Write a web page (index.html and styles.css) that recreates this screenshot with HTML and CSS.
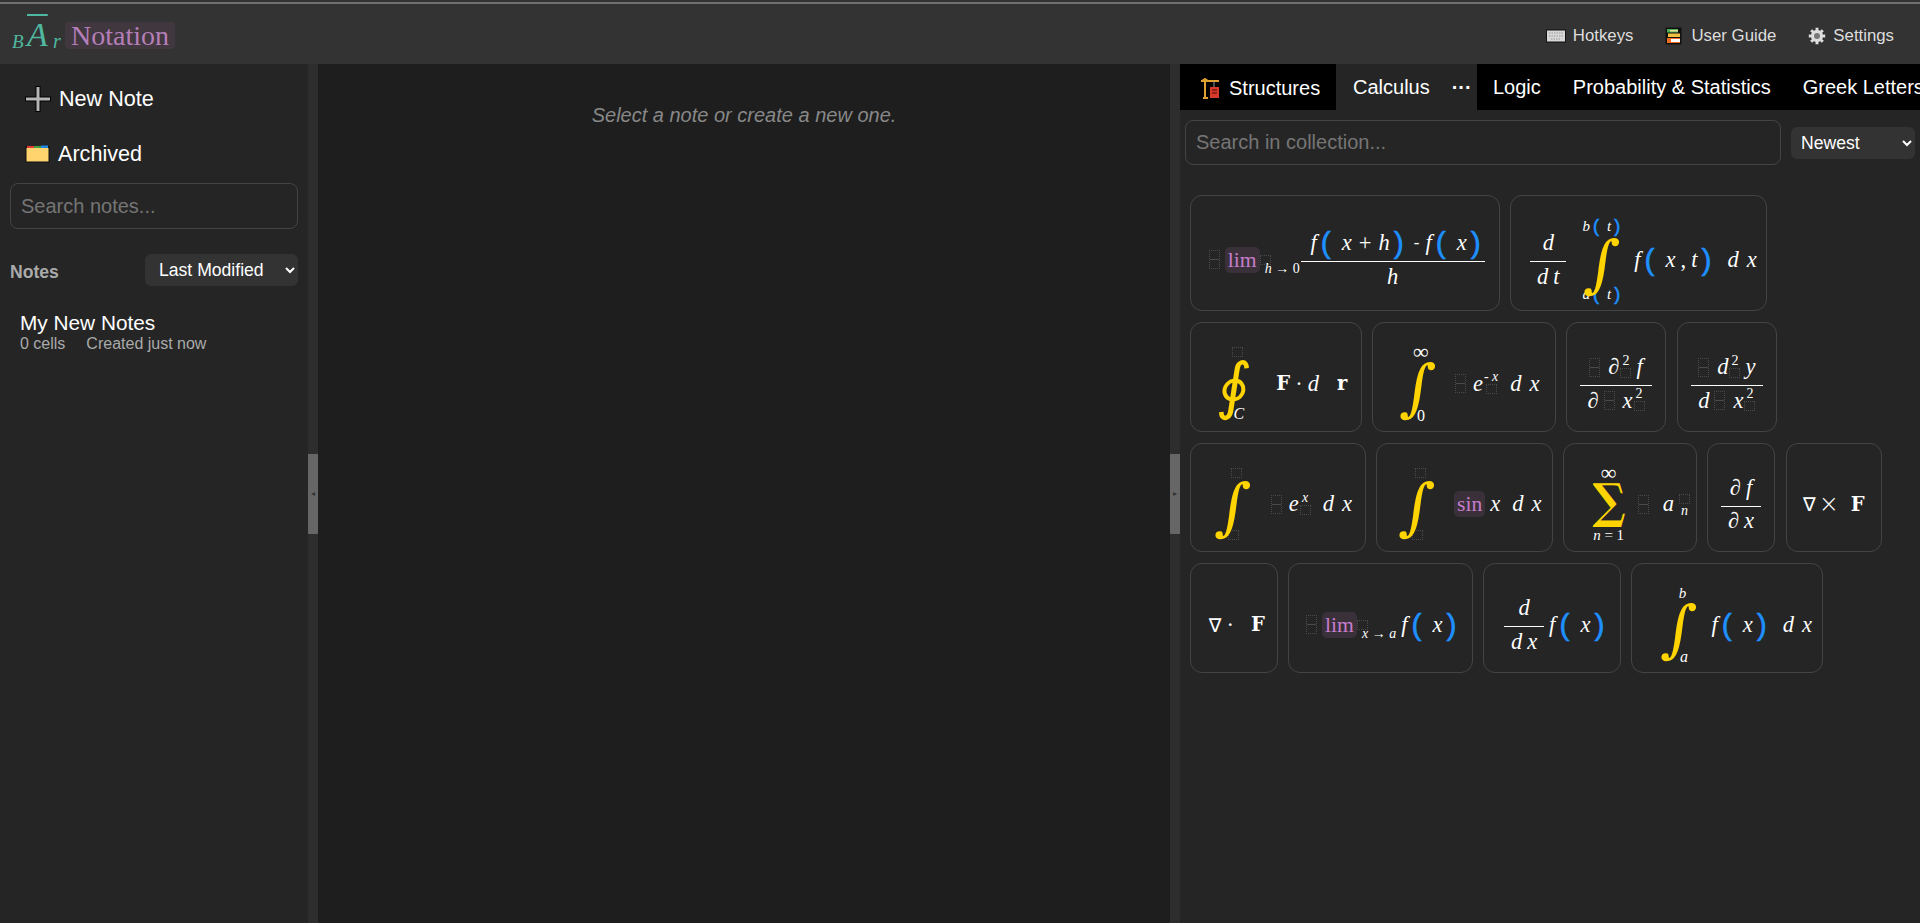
FILE: index.html
```html
<!DOCTYPE html>
<html lang="en">
<head>
<meta charset="utf-8">
<title>BAr Notation</title>
<link rel="stylesheet" href="styles.css">
</head>
<body>
<div class="topline"></div>
<header class="header">
  <div class="logo">
    <span class="lg-b">B</span><span class="lg-a">A</span><span class="lg-r">r</span>
    <span class="lg-name">Notation</span>
  </div>
  <nav class="hnav">
    <a class="hlink"><svg class="ic-key" viewBox="0 0 20 14"><rect x="0.5" y="1" width="19" height="12" fill="#d8d8d8" stroke="#111"/><path d="M3 4h14M3 7h14M5 10h10" stroke="#999" stroke-width="1" stroke-dasharray="1.5 1"/></svg>Hotkeys</a>
    <a class="hlink"><svg class="ic-book" viewBox="0 0 17 18"><rect x="0.5" y="0.5" width="16" height="17" rx="1" fill="#111"/><rect x="2" y="2" width="11" height="3.5" fill="#4caf50"/><rect x="5" y="3" width="8" height="1.5" fill="#e8e0a0"/><rect x="3" y="6.5" width="12" height="3.5" fill="#f0c040"/><rect x="2" y="11" width="13" height="5" fill="#ef6c1f"/><rect x="6" y="12" width="9" height="3" fill="#fff"/></svg>User Guide</a>
    <a class="hlink"><svg class="ic-gear" viewBox="0 0 18 18"><circle cx="9" cy="9" r="6.6" fill="#ddd" stroke="#111" stroke-width="1"/><path d="M9 0.8v3M9 14.2v3M0.8 9h3M14.2 9h3M3.2 3.2l2.1 2.1M12.7 12.7l2.1 2.1M14.8 3.2l-2.1 2.1M5.3 12.7l-2.1 2.1" stroke="#ddd" stroke-width="3"/><circle cx="9" cy="9" r="3" fill="#777"/></svg>Settings</a>
  </nav>
</header>
<div class="app">
  <aside class="side">
    <button class="sbtn new"><svg class="ic-plus" viewBox="0 0 26 26"><path d="M13 0v26M0 13h26" stroke="#000" stroke-width="5"/><path d="M13 1v24M1 13h24" stroke="#b5b5b5" stroke-width="3"/></svg>New Note</button>
    <button class="sbtn arch"><svg class="ic-folder" viewBox="0 0 25 18"><rect x="0.5" y="1" width="24" height="16.5" fill="#111"/><rect x="2" y="1" width="7" height="2" fill="#e53935"/><rect x="9" y="1" width="7" height="2" fill="#43a047"/><rect x="16" y="0.5" width="7" height="2.5" fill="#1e88e5"/><rect x="1.5" y="3" width="22" height="13.5" fill="#ffd36e"/></svg>Archived</button>
    <input class="field side-search" placeholder="Search notes...">
    <div class="notes-head">
      <span class="notes-label">Notes</span>
      <select class="pick pick-notes"><option>Last Modified</option></select>
    </div>
    <div class="note">
      <div class="note-title">My New Notes</div>
      <div class="note-meta"><span>0 cells</span><span>Created just now</span></div>
    </div>
  </aside>
  <div class="gutter"><div class="grip">◂</div></div>
  <main class="main"><p class="empty">Select a note or create a new one.</p></main>
  <div class="gutter"><div class="grip">▸</div></div>
  <section class="panel">
    <div class="tabs">
      <div class="tab tab-first"><svg class="ic-crane" viewBox="0 0 20 21"><path d="M1 3h18M5 1v20M3 20h5M2 3l3-2 3 2" stroke="#e0a030" stroke-width="2" fill="none"/><path d="M14 3v6" stroke="#999" stroke-width="1"/><rect x="10" y="9" width="9" height="11" fill="#d8392b"/><path d="M12 12h5M12 15h5" stroke="#7a1a12" stroke-width="1.5"/></svg>Structures</div>
      <div class="tab tab-active">Calculus<span class="dots">···</span></div>
      <div class="tab">Logic</div>
      <div class="tab">Probability &amp; Statistics</div>
      <div class="tab">Greek Letters</div>
    </div>
    <div class="toolbar">
      <input class="field coll-search" placeholder="Search in collection...">
      <select class="pick pick-coll"><option>Newest</option></select>
    </div>
    <div class="cards">

      <div class="card r1 w1">
        <span class="tofu tall"></span><span class="lim">lim</span><span class="under"><span class="tofu small up"></span><span class="script"><i>h</i> → 0</span></span>
        <span class="frac wide">
          <span class="num"><i>f</i><b class="par">(</b><i class="g0">x</i><em class="op">+</em><i>h</i><b class="par">)</b><em class="minus">-</em><i>f</i><b class="par">(</b><i class="g0">x</i><b class="par">)</b></span>
          <span class="den"><i>h</i></span>
        </span>
      </div>

      <div class="card r1 w2">
        <span class="frac f36"><span class="num"><i>d</i></span><span class="den"><i>d</i><i class="g1">t</i></span></span>
        <span class="bigop mid"><span class="lim-top"><i>b</i><b class="par spar">(</b><i class="g1">t</i><b class="par spar">)</b></span><span class="int">∫</span><span class="lim-bot"><i>a</i><b class="par spar">(</b><i class="g1">t</i><b class="par spar">)</b></span></span>
        <i class="g4">f</i><b class="par">(</b><i class="g0">x</i><em class="comma">,</em><i class="g1">t</i><b class="par">)</b><i class="g3">d</i><i class="g1">x</i>
      </div>

      <div class="card w3">
        <span class="bigop shift"><span class="tofu small off"></span><span class="int">∮</span><span class="sub-r"><i>C</i></span></span>
        <strong class="bold g6">F</strong><em class="dot">·</em><i>d</i><strong class="bold g6">r</strong>
      </div>

      <div class="card w4">
        <span class="bigop shift"><span class="lim-top off inf">∞</span><span class="int">∫</span><span class="sub-r roman">0</span></span>
        <span class="tofu tall g4"></span><i>e</i><span class="supbox"><span class="script">- <i>x</i></span><span class="tofu small"></span></span><i class="g3">d</i><i class="g1">x</i>
      </div>

      <div class="card w5">
        <span class="frac f72">
          <span class="num"><span class="tofu tall"></span><i class="g1">∂</i><span class="supbox"><span class="script">2</span><span class="tofu small"></span></span><i class="g1">f</i></span>
          <span class="den"><i>∂</i><span class="tofu tall g1"></span><i class="g1">x</i><span class="supbox"><span class="script">2</span><span class="tofu small"></span></span></span>
        </span>
      </div>

      <div class="card w6">
        <span class="frac f72">
          <span class="num"><span class="tofu tall"></span><i class="g1">d</i><span class="supbox"><span class="script">2</span><span class="tofu small"></span></span><i class="g1">y</i></span>
          <span class="den"><i>d</i><span class="tofu tall g1"></span><i class="g1">x</i><span class="supbox"><span class="script">2</span><span class="tofu small"></span></span></span>
        </span>
      </div>

      <div class="card r3 w7">
        <span class="bigop shift"><span class="tofu small off"></span><span class="int">∫</span><span class="tofu small sub-t"></span></span>
        <span class="tofu tall g4"></span><i>e</i><span class="supbox"><span class="script"><i>x</i></span><span class="tofu small"></span></span><i class="g3">d</i><i class="g1">x</i>
      </div>

      <div class="card r3 w8">
        <span class="bigop shift"><span class="tofu small off"></span><span class="int">∫</span><span class="tofu small sub-t"></span></span>
        <span class="lim g4">sin</span><i class="g1">x</i><i class="g3">d</i><i class="g1">x</i>
      </div>

      <div class="card r3 w9">
        <span class="bigop"><span class="lim-top inf">∞</span><span class="sum">∑</span><span class="lim-bot2"><i>n</i> = 1</span></span>
        <span class="tofu tall g4"></span><i class="g2">a</i><span class="subbox"><span class="tofu small"></span><span class="script"><i>n</i></span></span>
      </div>

      <div class="card r3 w10">
        <span class="frac f40"><span class="num"><i>∂</i><i class="g1">f</i></span><span class="den"><i>∂</i><i class="g1">x</i></span></span>
      </div>

      <div class="card r3 w11">
        <span class="nabla">∇</span><span class="times">×</span><strong class="bold g3">F</strong>
      </div>

      <div class="card w12">
        <span class="nabla">∇</span><em class="dot">·</em><strong class="bold g3">F</strong>
      </div>

      <div class="card w13">
        <span class="tofu tall"></span><span class="lim">lim</span><span class="under"><span class="tofu small up"></span><span class="script"><i>x</i> → <i>a</i></span></span><i class="g1">f</i><b class="par">(</b><i class="g0">x</i><b class="par">)</b>
      </div>

      <div class="card w14">
        <span class="frac f40"><span class="num"><i>d</i></span><span class="den"><i>d</i><i class="g1">x</i></span></span><i class="g1">f</i><b class="par">(</b><i class="g0">x</i><b class="par">)</b>
      </div>

      <div class="card w15">
        <span class="bigop"><span class="lim-top off"><i>b</i></span><span class="int">∫</span><span class="sub-r"><i>a</i></span></span>
        <i class="g4">f</i><b class="par">(</b><i class="g0">x</i><b class="par">)</b><i class="g3">d</i><i class="g1">x</i>
      </div>

    </div>
  </section>
</div>
</body>
</html>
```

FILE: styles.css
```css
* { box-sizing: border-box; }
html, body { margin: 0; height: 100%; overflow: hidden; }
body {
  width: 1920px; height: 923px;
  display: flex; flex-direction: column;
  background: #333;
  color: #fff;
  font-family: "Liberation Sans", Arial, sans-serif;
}
.topline { height: 2px; margin-top: 2px; background: #707070; flex: none; }
.header {
  height: 60px; flex: none;
  display: flex; align-items: center; justify-content: space-between;
  background: #333;
  padding: 3px 26px 0 12px;
}
.logo { display: flex; align-items: center; font-family: "Liberation Serif", serif; color: #4fb8a0; font-style: italic; }
.lg-b { font-size: 19px; margin-top: 12px; width: 15px; }
.lg-a { font-size: 34px; line-height: 34px; width: 21px; text-decoration: overline; text-decoration-thickness: 2px; margin-top: -2px; }
.lg-r { font-size: 20px; margin-top: 12px; margin-left: 5px; width: 12px; }
.lg-name {
  font-style: normal; font-size: 28px; line-height: 27px;
  color: #b47fb8; background: #41373f; border-radius: 4px;
  padding: 0 6px; margin-left: 0;
}
.hnav { display: flex; gap: 32px; }
.hlink { display: flex; align-items: center; gap: 7px; font-size: 16.8px; color: #ddd; }
.ic-key { width: 20px; height: 14px; }
.ic-book { width: 17px; height: 18px; margin-right: 2px; }
.ic-gear { width: 18px; height: 18px; }

.app { flex: 1; display: flex; min-height: 0; }
.side { width: 308px; flex: none; background: #252525; padding: 0 10px; display: flex; flex-direction: column; }
.sbtn {
  display: flex; align-items: center;
  background: none; border: 0; color: #fff; padding: 0 0 0 15px;
  font: 21.6px "Liberation Sans", Arial, sans-serif;
  text-align: left;
}
.new { height: 26px; margin-top: 22px; gap: 8px; }
.arch { height: 26px; margin-top: 29px; gap: 8px; }
.ic-plus { width: 26px; height: 26px; }
.ic-folder { width: 25px; height: 18px; }
.field {
  background: #252525; color: #fff;
  border: 1px solid #444; border-radius: 8px;
  font: 20px "Liberation Sans", Arial, sans-serif;
  padding: 0 10px;
  outline: 0;
}
.field::placeholder { color: #757575; opacity: 1; }
.side-search { width: 288px; height: 46px; margin-top: 16px; }
.notes-head { display: flex; justify-content: space-between; align-items: center; margin-top: 25px; height: 32px; }
.notes-label { color: #aaa; font-weight: 700; font-size: 17.6px; margin-top: 4px; }
.pick {
  height: 32px; background: #333; color: #fff; border: 0; border-radius: 6px;
  font: 17.6px "Liberation Sans", Arial, sans-serif;
  padding: 0 0 0 10px;
}
.pick-notes { width: 153px; }
.note { padding: 0 10px; margin-top: 25px; }
.note-title { font-size: 20.8px; line-height: 24px; }
.note-meta { font-size: 16px; line-height: 18px; color: #aaa; display: flex; gap: 21px; }

.gutter { width: 10px; flex: none; background: #2d2d2d; display: flex; align-items: center; }
.grip {
  width: 10px; height: 80px; background: #666; color: #333;
  font-size: 8px; line-height: 80px; text-align: center;
  font-family: "DejaVu Sans", sans-serif;
}
.main { flex: 1; background: #1e1e1e; min-width: 0; }
.empty { margin: 40px 0 0; text-align: center; font-style: italic; font-size: 20px; line-height: 22px; color: #888; }

.panel { width: 740px; flex: none; background: #252525; display: flex; flex-direction: column; min-width: 0; }
.tabs { display: flex; height: 46px; background: #000; overflow: hidden; flex: none; }
.tab { padding: 0 16px; font-size: 20px; line-height: 46px; white-space: nowrap; flex: none; }
.tab-first { display: flex; align-items: center; gap: 9px; padding: 2px 15px 0 20px; width: 156px; }
.ic-crane { width: 20px; height: 21px; }
.tab-active { background: #252525; width: 141px; padding-left: 17px; }
.dots { margin-left: 22px; font-weight: 700; }
.toolbar { display: flex; align-items: center; padding: 10px 5px 0; gap: 10px; height: 55px; flex: none; }
.coll-search { width: 596px; height: 45px; }
.pick-coll { width: 124px; padding-left: 6px; }

.cards { display: flex; flex-wrap: wrap; gap: 11px 10.5px; padding: 30px 0 0 10px; align-content: flex-start; }
.card {
  height: 110px;
  border: 1px solid #444; border-radius: 12px;
  display: flex; align-items: center; justify-content: center;
  padding-top: 13px;
  font: 22.5px "Liberation Serif", serif;
  color: #fff;
  white-space: nowrap;
}
.r1 { height: 116px; }
.r3 { height: 109px; }
.w1 { width: 309.5px; padding-left: 4px; } .w2 { width: 257px; padding-left: 10px; }
.w3 { width: 171.5px; } .w4 { width: 183.5px; } .w5 { width: 100px; } .w6 { width: 100.5px; }
.w7 { width: 175.5px; } .w8 { width: 176.5px; } .w9 { width: 133.5px; } .w10 { width: 68px; } .w11 { width: 96.5px; }
.w12 { width: 87.5px; padding-left: 6px; } .w13 { width: 184.5px; padding-left: 6px; } .w14 { width: 137.5px; padding-left: 9px; } .w15 { width: 191.5px; padding-left: 3px; }

.card i { font-style: italic; }
.card em { font-style: normal; }
.g0 { margin-left: 7px; }
.g1 { margin-left: 5px; }
.g2 { margin-left: 7px; }
.g3 { margin-left: 12px; }
.g3 + .g1 { margin-left: 8px; }
.g4 { margin-left: 13px; }
.g5 { margin-left: 15px; }
.g6 { margin-left: 18px; }
.par { color: #1e90ff; font-weight: 400; font-size: 30px; line-height: 24px; margin: 0 4px; font-family: "Liberation Sans", sans-serif; -webkit-text-stroke: 0.6px #1e90ff; }
.spar { font-size: 18px; line-height: 18px; margin: 0 2px; }
.op { margin: 0 7px; }
.minus { margin: 0 6px; font-size: 17px; }
.comma { margin-left: 5px; }
.dot { margin: 0 5px; }
.bold { font-family: "DejaVu Serif", serif; font-weight: 700; font-size: 19.5px; }
.lim {
  color: #c77dcb; background: #3a303a; border-radius: 5px;
  padding: 0 3px; line-height: 26px; height: 26px; font-size: 21.6px;
}
.tofu {
  display: inline-block; width: 11px; height: 10px; flex: none;
  border: 1px dotted #4a4a4a;
}
.tall { height: 19px; margin-right: 7px; background: linear-gradient(#4a4a4a, #4a4a4a) 0 50% / 100% 1px no-repeat; }
.card > .tall:first-child { margin-right: 5px; }
.num > .tall:first-child { margin-right: 3px; }
.up { margin-left: -5px; margin-bottom: -3px; }
.under { display: flex; flex-direction: column; align-items: flex-start; margin: 12px 5px 0 5px; }
.w1 .under { margin-right: 1px; }
.w13 .under { margin-right: 0; }
.script { font-size: 14px; line-height: 14px; }
.frac { display: inline-flex; flex-direction: column; align-items: center; flex: none; }
.num, .den { display: flex; align-items: center; height: 28px; }
.num { border-bottom: 1.5px solid #fff; height: 33px; width: 100%; justify-content: center; padding-bottom: 4px; }
.wide .num { padding-left: 10px; }
.den { padding-top: 1px; }
.den > .tall { margin-right: 3px; }
.wide { width: 184px; }
.f36 { width: 36px; }
.f40 { width: 40px; }
.f72 { width: 72px; }
.bigop { display: inline-flex; flex-direction: column; align-items: center; flex: none; width: 38px; margin-left: 16px; }
.bigop.mid { margin-left: 17px; }
.bigop.shift { margin-left: 11px; margin-right: 5px; }
.w9 .bigop { margin-left: 20px; margin-right: -3px; }
.off { margin-left: 6px; }
.int, .sum {
  color: #ffd400; font-family: "DejaVu Serif", serif; font-size: 62px; line-height: 58px;
  font-style: normal; transform: skewX(-6deg);
}
.sum { font-size: 40px; line-height: 42px; font-weight: 700; transform: scale(1.1, 1.2); }
.lim-top, .lim-bot, .lim-bot2 { display: flex; align-items: center; font-size: 15px; line-height: 14px; gap: 1px; white-space: pre; }
.inf { font-size: 22px; }
.lim-bot { margin-top: -8px; }
.lim-bot2 { margin-top: 6px; display: block; }
.sub-r { font-size: 16px; line-height: 14px; margin-left: 9px; margin-top: -8px; }
.sub-t { margin-top: -6px; }
.roman { font-style: normal; margin-left: 6px; }
.supbox { display: inline-flex; flex-direction: column; align-items: center; margin-top: -3px; margin-left: 1px; }
.subbox { display: inline-flex; flex-direction: column; align-items: center; margin-left: 5px; margin-top: 4px; }
.nabla { font-family: "DejaVu Sans", sans-serif; font-size: 19px; }
.times { margin-left: 3px; font-size: 24px; font-family: "DejaVu Sans", sans-serif; font-weight: 200; }
```
